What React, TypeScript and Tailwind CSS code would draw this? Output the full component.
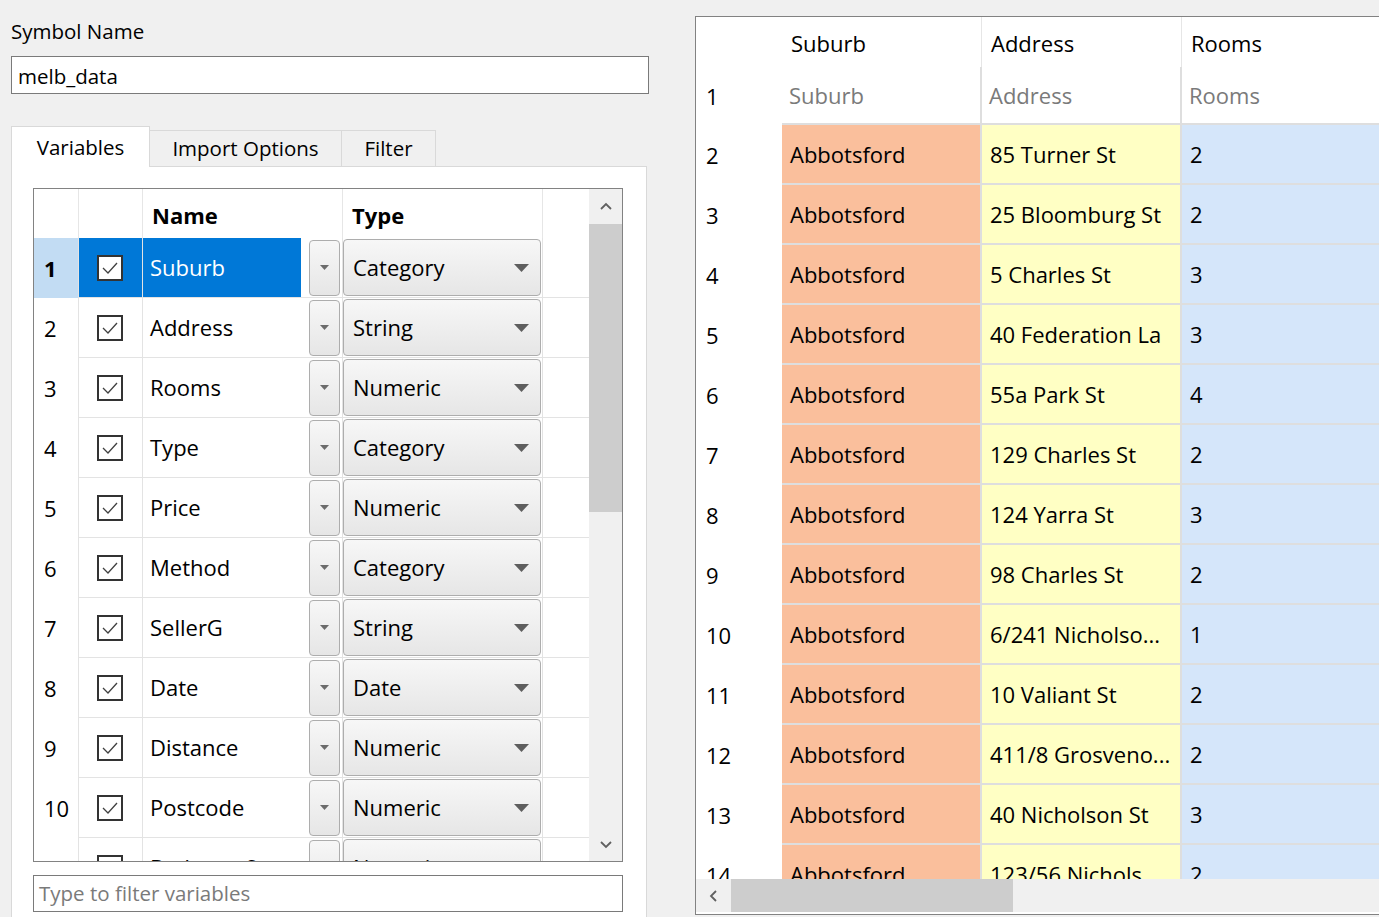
import React from 'react';

const variables = [
  { name: 'Suburb', type: 'Category' },
  { name: 'Address', type: 'String' },
  { name: 'Rooms', type: 'Numeric' },
  { name: 'Type', type: 'Category' },
  { name: 'Price', type: 'Numeric' },
  { name: 'Method', type: 'Category' },
  { name: 'SellerG', type: 'String' },
  { name: 'Date', type: 'Date' },
  { name: 'Distance', type: 'Numeric' },
  { name: 'Postcode', type: 'Numeric' },
  { name: 'Bedroom2', type: 'Numeric' },
];

const preview = [
  ['85 Turner St', '2'],
  ['25 Bloomburg St', '2'],
  ['5 Charles St', '3'],
  ['40 Federation La', '3'],
  ['55a Park St', '4'],
  ['129 Charles St', '2'],
  ['124 Yarra St', '3'],
  ['98 Charles St', '2'],
  ['6/241 Nicholso...', '1'],
  ['10 Valiant St', '2'],
  ['411/8 Grosveno...', '2'],
  ['40 Nicholson St', '3'],
  ['123/56 Nichols...', '2'],
];

const Caret = ({ small }: { small?: boolean }) =>
  small ? (
    <svg width="9" height="5" viewBox="0 0 9 5">
      <polygon points="0,0 9,0 4.5,5" fill="#6b6b6b" />
    </svg>
  ) : (
    <svg width="15" height="8" viewBox="0 0 15 8">
      <polygon points="0,0 15,0 7.5,8" fill="#5e5e5e" />
    </svg>
  );

const Chevron = ({ dir }: { dir: 'up' | 'down' | 'left' }) => {
  const pts =
    dir === 'up' ? '1,7 6,2 11,7' : dir === 'down' ? '1,2 6,7 11,2' : '7,1 2,6 7,11';
  const size = dir === 'left' ? { w: 9, h: 12 } : { w: 12, h: 9 };
  return (
    <svg width={size.w} height={size.h} viewBox={`0 0 ${size.w} ${size.h}`}>
      <polyline points={pts} fill="none" stroke="#606060" strokeWidth="1.8" />
    </svg>
  );
};

const Checkbox = () => (
  <div className="w-[26px] h-[26px] border-2 border-[#333333] bg-white flex items-center justify-center">
    <svg width="18" height="14" viewBox="0 0 18 14">
      <polyline points="2,7 7,12 16,2" fill="none" stroke="#404040" strokeWidth="1.3" />
    </svg>
  </div>
);

function VariablesTable() {
  return (
    <div className="w-[590px] h-[674px] border border-[#828282] bg-white flex">
      <div className="flex-1 overflow-hidden">
        {/* Header */}
        <div className="flex h-[49px] font-bold">
          <div className="w-[45px] border-r border-[#e6e6e6]" />
          <div className="w-[64px] border-r border-[#e6e6e6]" />
          <div className="w-[200px] border-r border-[#e6e6e6] pl-[9px] flex items-center pt-[4px]">Name</div>
          <div className="w-[200px] border-r border-[#e6e6e6] pl-[9px] flex items-center pt-[4px]">Type</div>
          <div className="flex-1" />
        </div>
        {variables.map((v, i) => {
          const sel = i === 0;
          return (
            <div key={v.name} className="flex h-[60px]">
              <div
                className={`w-[45px] border-r border-[#e3e3e3] pl-[10px] flex items-center ${
                  sel ? 'bg-[#c2dcf3] font-bold' : ''
                }`}
              >
                {i + 1}
              </div>
              <div
                className={`w-[64px] border-r border-b border-[#e3e3e3] flex items-center justify-center pr-px ${
                  sel ? 'bg-[#0078d7]' : ''
                }`}
              >
                <Checkbox />
              </div>
              <div className="w-[200px] border-r border-b border-[#e3e3e3] flex items-center">
                <div
                  className={`w-[158px] h-full pl-[7px] flex items-center ${
                    sel ? 'bg-[#0078d7] text-white' : ''
                  }`}
                >
                  {v.name}
                </div>
                <div className="ml-[8px] w-[31px] h-[56px] rounded-[4px] border border-[#adadad] bg-gradient-to-b from-[#f7f7f7] to-[#e6e6e6] flex items-center justify-center">
                  <Caret small />
                </div>
              </div>
              <div className="w-[200px] border-r border-b border-[#e3e3e3] flex items-center">
                <div className="w-[198px] h-[57px] rounded-[4px] border border-[#adadad] bg-gradient-to-b from-[#f7f7f7] to-[#e6e6e6] flex items-center justify-between pl-[9px] pr-[11px]">
                  <span>{v.type}</span>
                  <Caret />
                </div>
              </div>
              <div className="flex-1 border-b border-[#e3e3e3]" />
            </div>
          );
        })}
      </div>
      {/* Vertical scrollbar */}
      <div className="w-[33px] bg-[#f0f0f0] flex flex-col">
        <div className="h-[35px] flex items-center justify-center">
          <Chevron dir="up" />
        </div>
        <div className="h-[288px] bg-[#cdcdcd]" />
        <div className="flex-1" />
        <div className="h-[34px] flex items-center justify-center">
          <Chevron dir="down" />
        </div>
      </div>
    </div>
  );
}

function PreviewTable() {
  const cellLine = 'border-r-2 border-b-2 border-[#dedede]';
  return (
    <div className="w-[720px] h-[899px] border border-[#828282] bg-white flex flex-col">
      <div className="flex-1 overflow-hidden">
        <div className="flex h-[50px]">
          <div className="w-[86px]" />
          <div className="w-[200px] border-r border-[#e6e6e6] pl-[9px] flex items-center pt-[3px]">Suburb</div>
          <div className="w-[200px] border-r border-[#e6e6e6] pl-[9px] flex items-center pt-[3px]">Address</div>
          <div className="w-[232px] pl-[9px] flex items-center pt-[3px]">Rooms</div>
        </div>
        <div className="flex h-[58px]">
          <div className="w-[86px] pl-[10px] flex items-center">1</div>
          <div className={`w-[200px] ${cellLine} pl-[7px] flex items-center text-[#7a7a7a]`}>Suburb</div>
          <div className={`w-[200px] ${cellLine} pl-[7px] flex items-center text-[#7a7a7a]`}>Address</div>
          <div className={`w-[232px] ${cellLine} pl-[7px] flex items-center text-[#7a7a7a]`}>Rooms</div>
        </div>
        {preview.map(([addr, rooms], i) => (
          <div key={i} className="flex h-[60px]">
            <div className="w-[86px] pl-[10px] flex items-center pt-px">{i + 2}</div>
            <div className={`w-[200px] ${cellLine} bg-[#fabf9c] pl-[8px] flex items-center pt-px`}>Abbotsford</div>
            <div className={`w-[200px] ${cellLine} bg-[#ffffc4] pl-[8px] flex items-center pt-px`}>{addr}</div>
            <div className={`w-[232px] ${cellLine} bg-[#d5e6fa] pl-[8px] flex items-center pt-px`}>{rooms}</div>
          </div>
        ))}
      </div>
      {/* Horizontal scrollbar */}
      <div className="h-[33px] mb-[2px] shrink-0 bg-[#f0f0f0] flex">
        <div className="w-[35px] flex items-center justify-center">
          <Chevron dir="left" />
        </div>
        <div className="w-[282px] bg-[#cdcdcd]" />
      </div>
    </div>
  );
}

export default function App() {
  return (
    <div className="w-[1379px] h-[917px] bg-[#f0f0f0] overflow-hidden flex font-['Open_Sans',sans-serif] text-[22px] text-black">
      <div className="w-[695px] shrink-0 pl-[11px] flex flex-col">
        <div className="shrink-0 pt-[19px] text-[20.5px] leading-[24px]">Symbol Name</div>
        <div className="shrink-0 mt-[13px] w-[638px] h-[38px] border border-[#7a7a7a] bg-white px-[6px] pt-[2px] flex items-center text-[20.5px]">
          melb_data
        </div>
        {/* Tabs */}
        <div className="shrink-0 mt-[32px] flex items-end text-[20.5px]">
          <div className="relative z-10 w-[139px] h-[41px] bg-white border border-[#d9d9d9] border-b-0 flex items-center justify-center">
            Variables
          </div>
          <div className="w-[192px] h-[37px] bg-[#f0f0f0] border border-l-0 border-[#d9d9d9] flex items-center justify-center">
            Import Options
          </div>
          <div className="w-[94px] h-[37px] bg-[#f0f0f0] border border-l-0 border-[#d9d9d9] flex items-center justify-center">
            Filter
          </div>
        </div>
        <div className="-mt-px w-[636px] h-[760px] shrink-0 bg-white border border-[#d9d9d9] pl-[21px] pt-[21px]">
          <VariablesTable />
          <div className="mt-[13px] w-[590px] h-[37px] border border-[#7a7a7a] bg-white pl-[5px] flex items-center text-[20.5px] text-[#7a7a7a]">
            Type to filter variables
          </div>
        </div>
      </div>
      <div className="pt-[16px]">
        <PreviewTable />
      </div>
    </div>
  );
}
